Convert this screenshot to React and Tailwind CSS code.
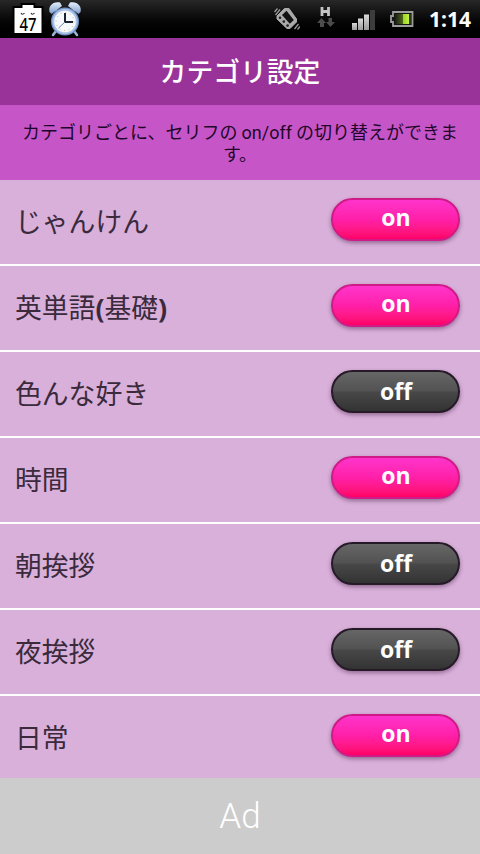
import { useState } from 'react'

const initialCategories = [
  { label: 'じゃんけん', on: true },
  { label: '英単語', note: '基礎', on: true },
  { label: '色んな好き', on: false },
  { label: '時間', on: true },
  { label: '朝挨拶', on: false },
  { label: '夜挨拶', on: false },
  { label: '日常', on: true },
]

function CalendarIcon() {
  return (
    <svg className="w-8 h-[38px]" viewBox="0 0 32 38">
      <path d="M1.500 7h8V4h13v3h8v27h-29z" fill="#fff" stroke="#000" strokeWidth="2" />
      <path d="M9 13q1.500 2.500 3.500 0M19 13q1.500 2.500 3.500 0" fill="none" stroke="#333" strokeWidth="1.200" />
      <text x="16" y="31" textAnchor="middle" textLength="17" lengthAdjust="spacingAndGlyphs" fontSize="17.500" fontFamily="'Noto Sans', sans-serif" fontWeight="500" fill="#000">47</text>
    </svg>
  )
}

function AlarmIcon() {
  return (
    <svg className="w-[34px] h-[38px]" viewBox="0 0 34 38">
      <defs>
        <linearGradient id="bell" x1="0" y1="0" x2="0" y2="1">
          <stop offset="0" stopColor="#e6f0fc" />
          <stop offset="1" stopColor="#7b9ccb" />
        </linearGradient>
      </defs>
      <path d="M8 31l-3 4M26 31l3 4" stroke="#9bb6dc" strokeWidth="2.500" strokeLinecap="round" />
      <path d="M9 11L6.500 8M25 11l2.500-3" stroke="#8aa5cc" strokeWidth="2" />
      <path d="M1.500 12C0 6 5 1 12 2.500l2 3.500L3.500 14z" fill="url(#bell)" />
      <path d="M32.500 12C34 6 29 1 22 2.500L20 6l10.500 8z" fill="url(#bell)" />
      <circle cx="17" cy="21.500" r="14" fill="#7191c2" />
      <circle cx="17" cy="21.500" r="12.700" fill="#a9c3e8" />
      <circle cx="17" cy="21.500" r="10.800" fill="#f5f8fd" />
      <circle cx="17" cy="21.500" r="9" fill="none" stroke="#c9b877" strokeWidth="1" strokeDasharray="1 3.712" />
      <path d="M17 13v9h8" fill="none" stroke="#1b2230" strokeWidth="2" />
      <path d="M17 22l-6.500 6" stroke="#6f86ad" strokeWidth="1" />
    </svg>
  )
}

function VibrateIcon() {
  return (
    <svg className="w-[26px] h-6" viewBox="0 0 26 24">
      {/* tilted handset, keys towards the lower left */}
      <path d="M10.500 1.500h4.500L22.500 12v3L16 21.500h-3L3 12V9z" fill="#aaa" stroke="#aaa" strokeWidth="1" strokeLinejoin="round" />
      <path d="M12.500 3.800L19.800 13l-4 3.800L8 8z" fill="#111" />
      <circle cx="6" cy="10.800" r="1.300" fill="#222" />
      <circle cx="9.800" cy="14.600" r="1.300" fill="#222" />
      <circle cx="13.600" cy="18.600" r="1.300" fill="#222" />
      <path d="M1.500 8L6 2.500M0.500 5L3.500 1.500M20.500 22l4-5M23.500 22.500l2.500-3" stroke="#999" strokeWidth="1.300" />
    </svg>
  )
}

function DataIcon() {
  return (
    <svg className="w-5 h-[22px]" viewBox="0 0 20 22">
      <path d="M6 1v9M12.500 1v9M6 5.500h6.500" stroke="#c4c4c4" strokeWidth="2.800" fill="none" />
      <path d="M5.500 12L1 17h3v4h4v-4h2z" fill="#4c4c4c" />
      <path d="M14.500 21l4.500-5h-3v-4h-3.500v4H10z" fill="#4c4c4c" />
    </svg>
  )
}

function SignalIcon() {
  return (
    <svg className="w-6 h-[22px]" viewBox="0 0 24 22">
      <defs>
        <linearGradient id="bar" x1="0" y1="0" x2="0" y2="1">
          <stop offset="0" stopColor="#d8d8d8" />
          <stop offset="1" stopColor="#9b9b9b" />
        </linearGradient>
      </defs>
      <rect x="0" y="14" width="5" height="7" fill="url(#bar)" />
      <rect x="6" y="9.500" width="5" height="11.500" fill="url(#bar)" />
      <rect x="12" y="5.500" width="5" height="15.500" fill="url(#bar)" />
      <rect x="18" y="1" width="5" height="20" fill="#3c3c3c" />
    </svg>
  )
}

function BatteryIcon() {
  return (
    <svg className="w-6 h-[18px]" viewBox="0 0 24 18">
      <defs>
        <linearGradient id="charge" x1="0" y1="0" x2="1" y2="0">
          <stop offset="0" stopColor="#1a1a1a" />
          <stop offset="0.480" stopColor="#4d6615" />
          <stop offset="0.520" stopColor="#a0d422" />
          <stop offset="0.880" stopColor="#c4f04c" />
          <stop offset="0.900" stopColor="#2c3a16" />
        </linearGradient>
      </defs>
      <path d="M3 2h19.500v14H3v-4H1V6h2z" fill="#151515" stroke="#9c9c9c" strokeWidth="1.800" />
      <rect x="5" y="4" width="16" height="10" fill="url(#charge)" />
    </svg>
  )
}

function StatusBar() {
  return (
    <div className="h-[38px] shrink-0 flex items-center justify-between bg-linear-to-b from-[#282828] to-black pl-3 pr-[9px]">
      <div className="flex gap-1">
        <CalendarIcon />
        <AlarmIcon />
      </div>
      <div className="flex items-center">
        <VibrateIcon />
        <div className="ml-4 -mt-1"><DataIcon /></div>
        <div className="ml-4 mt-0.5"><SignalIcon /></div>
        <div className="ml-[14px]"><BatteryIcon /></div>
        <span className="ml-[15px] w-[42px] flex justify-end whitespace-nowrap font-['Noto_Sans',sans-serif] font-bold text-[21px] leading-none text-white">1:14</span>
      </div>
    </div>
  )
}

function Toggle({ on, onClick }) {
  return (
    <button
      onClick={onClick}
      className={`w-[129px] h-[43px] shrink-0 rounded-full border-2 pl-px text-white font-['Open_Sans',sans-serif] font-bold text-[23px] shadow-[0_2px_4px_rgba(60,20,60,0.45)] ${
        on
          ? 'border-[#d01a87] bg-linear-to-b from-[#ff33cc] via-[#ff1fa8] to-[#ff0066] leading-[34px] pb-[5px]'
          : 'border-[#261a28] bg-[linear-gradient(#666,#525252_49%,#484848_51%,#333)] leading-[38px] pb-px'
      }`}
    >
      {on ? 'on' : 'off'}
    </button>
  )
}

export default function App() {
  const [categories, setCategories] = useState(initialCategories)

  const toggle = (index) => {
    setCategories((prev) => prev.map((c, i) => (i === index ? { ...c, on: !c.on } : c)))
  }

  return (
    <div className="w-[480px] h-[854px] flex flex-col overflow-hidden bg-[#d8b0d9] font-['Noto_Sans_CJK_JP',sans-serif]">
      <StatusBar />

      {/* Header */}
      <h1 className="h-[67px] shrink-0 bg-[#993399] text-center text-white text-[26.8px] leading-[66px] font-medium">
        カテゴリ設定
      </h1>
      <p className="h-[75px] shrink-0 bg-[#c656c8] pt-4 text-center text-[18px] leading-[21px] text-[#22062a]">
        カテゴリごとに、セリフの <span className="font-[Roboto,sans-serif] text-[18px]">on/off</span> の切り替えができま
        <br />
        す。
      </p>

      {/* Category list */}
      <ul className="flex-1 min-h-0 overflow-hidden">
        {categories.map((c, i) => (
          <li key={c.label} className="h-[86px] flex items-start justify-between border-b-2 border-white pl-[15px] pr-5 pt-[18px]">
            <span className="text-[26.8px] leading-[46px] text-[#3a2a3c]">
              {c.label}
              {c.note && (
                <>
                  <b className="font-['Noto_Sans',sans-serif]">(</b>
                  {c.note}
                  <b className="font-['Noto_Sans',sans-serif]">)</b>
                </>
              )}
            </span>
            <Toggle on={c.on} onClick={() => toggle(i)} />
          </li>
        ))}
      </ul>

      {/* Ad slot */}
      <div className="h-[76px] shrink-0 bg-[#ccc] text-center text-white font-[Roboto,sans-serif] font-light text-[35px] leading-[77px]">
        Ad
      </div>
    </div>
  )
}
